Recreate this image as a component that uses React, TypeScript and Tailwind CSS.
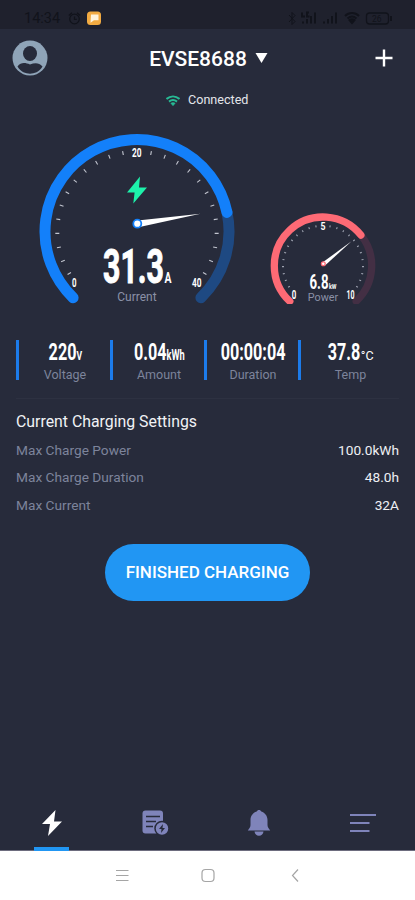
import type { ReactNode } from 'react';

type GaugeProps = {
  cx: number;
  cy: number;
  r: number;
  width: number;
  start?: number;
  value: number;
  color: string;
  track: string;
};

function polar(cx: number, cy: number, r: number, deg: number) {
  const a = (deg * Math.PI) / 180;
  return [cx + r * Math.cos(a), cy + r * Math.sin(a)];
}

function arc(cx: number, cy: number, r: number, from: number, to: number) {
  const [x1, y1] = polar(cx, cy, r, from);
  const [x2, y2] = polar(cx, cy, r, to);
  return `M${x1} ${y1}A${r} ${r} 0 ${to - from > 180 ? 1 : 0} 1 ${x2} ${y2}`;
}

function GaugeArc({ cx, cy, r, width, start = 135, value, color, track }: GaugeProps) {
  return (
    <g fill="none" strokeWidth={width} strokeLinecap="round">
      <path d={arc(cx, cy, r, 135 + value, 540 - start)} stroke={track} />
      <path d={arc(cx, cy, r, start, 135 + value)} stroke={color} />
    </g>
  );
}

function Ticks({ cx, cy, r, length, color }: { cx: number; cy: number; r: number; length: number; color: string }) {
  const steps = Array.from({ length: 12 }, (_, i) => (i + 1) * 10.15);
  return (
    <g stroke={color} strokeWidth={1.1}>
      {[...steps, ...steps.map((s) => -s)].map((s) => {
        const [x1, y1] = polar(cx, cy, r - length / 2, s - 90);
        const [x2, y2] = polar(cx, cy, r + length / 2, s - 90);
        return <line key={s} x1={x1} y1={y1} x2={x2} y2={y2} />;
      })}
    </g>
  );
}

function CurrentGauge() {
  return (
    <svg width="204" height="180" viewBox="35 130 204 180" className="font-bold">
      <GaugeArc cx={137} cy={231.5} r={92} width={11} start={134} value={213} color="#1380fa" track="#1e4982" />
      <Ticks cx={137} cy={231.5} r={79.7} length={4} color="#c3c6d0" />
      <g fill="#fff">
        <text x="132" y="156.5" fontSize="12.5" textLength="9.5" lengthAdjust="spacingAndGlyphs">20</text>
        <text x="72" y="287" fontSize="12.5" textLength="4.5" lengthAdjust="spacingAndGlyphs">0</text>
        <text x="192" y="287" fontSize="12.5" textLength="9.5" lengthAdjust="spacingAndGlyphs">40</text>
        <text x="103" y="283" fontSize="48.5" stroke="#fff" strokeWidth="1" textLength="61" lengthAdjust="spacingAndGlyphs">31.3</text>
        <text x="164.5" y="283" fontSize="15.5" textLength="7" lengthAdjust="spacingAndGlyphs">A</text>
      </g>
      <text x="137" y="301" fontSize="12" textAnchor="middle" fill="#8b91a7" className="font-normal">Current</text>
      <path d="M140 176.500 127 192.500h7.600l-1.300 11L147 187.500h-8z" fill="#1df2ab" />
      <path d="M137.700 220.500 200.500 213.800 138.400 227.200z" fill="#fff" />
      <circle cx="137.300" cy="223.700" r="4" fill="#fff" stroke="#1380fa" strokeWidth="1.800" />
    </svg>
  );
}

function PowerGauge() {
  return (
    <svg width="112" height="96" viewBox="267 208 112 96" className="font-bold">
      <GaugeArc cx={323} cy={265.7} r={48.7} width={7.3} start={133} value={186} color="#fd6a75" track="#432f44" />
      <Ticks cx={323} cy={265.7} r={40} length={2} color="#9da1af" />
      <g fill="#fff">
        <text x="320.500" y="230" fontSize="11.500" textLength="5" lengthAdjust="spacingAndGlyphs">5</text>
        <text x="291.800" y="298.500" fontSize="12" textLength="4.500" lengthAdjust="spacingAndGlyphs">0</text>
        <text x="346.500" y="298.500" fontSize="12" textLength="8" lengthAdjust="spacingAndGlyphs">10</text>
        <text x="309.500" y="288.500" fontSize="20.500" textLength="19" lengthAdjust="spacingAndGlyphs">6.8</text>
        <text x="329" y="288.500" fontSize="7" textLength="7.500" lengthAdjust="spacingAndGlyphs">kW</text>
      </g>
      <text x="323" y="300.500" fontSize="10.800" textAnchor="middle" fill="#8b91a7" className="font-normal">Power</text>
      <path d="M322.400 262.600 351.500 241.300 325 265.600z" fill="#fff" />
      <circle cx="323.300" cy="263.700" r="1.900" fill="#fff" stroke="#fd6a75" strokeWidth="1.300" />
    </svg>
  );
}

function Stat({ children, label, last = false }: { children: ReactNode; label: string; last?: boolean }) {
  return (
    <div className={`flex h-[40px] border-l-[3.5px] border-[#1c7bea] pl-px ${last ? 'flex-1' : 'w-[94px]'}`}>
      <div className="flex min-w-0 flex-1 flex-col items-center">
        <div className="flex h-[24px] items-baseline justify-center whitespace-nowrap text-[24.5px] leading-[24px] font-bold text-white">
          {children}
        </div>
        <div className="mt-[3px] text-[12.5px] leading-4 text-[#7d849b]">{label}</div>
      </div>
    </div>
  );
}

const settings = [
  ['Max Charge Power', '100.0kWh'],
  ['Max Charge Duration', '48.0h'],
  ['Max Current', '32A'],
];

function StatusBar() {
  return (
    <div className="flex h-[29px] items-start bg-[#1f212d] pt-[8px] text-[#11131b]">
      <span className="ml-[24px] w-[44px] text-[14.5px] leading-[21px]">14:34</span>
      <svg width="34" height="20" viewBox="67 8 34 20" fill="none">
        <circle cx="73.5" cy="19" r="4.8" stroke="#11131b" strokeWidth="1.3" />
        <path d="M67.8 15.5 71 12.8M79.2 15.5 76 12.8M73.5 16.5v2.8h2.3" stroke="#11131b" strokeWidth="1.2" />
        <rect x="86" y="11.5" width="14" height="13.5" rx="3.5" fill="#f2ab42" />
        <path d="M90 14.5h7.5v5.8H93l-3.5 2.5z" fill="#fff4dc" />
      </svg>
      <svg width="108" height="20" viewBox="286 8 108 20" className="mr-[21px] ml-auto" fill="none" stroke="#11131b" strokeWidth="1.3">
        <path d="m289 15 6 6.5-3 3v-12l3 3-6 6.5" strokeWidth="1" />
        <path d="M303 23.5v-2M307 23.5v-4.5M311 23.5V16M315 23.5V12.5M302 12.5v4h3M309 12.5h-2v4h2.5" strokeWidth="2" />
        <path d="M324 23.5v-2M328 23.5v-4.5M332 23.5V16M336 23.5V12.5" strokeWidth="2" />
        <path d="M345 16c4-4 10-4 14 0M347.5 18.5c3-2.6 6-2.6 9 0" strokeWidth="2" />
        <path d="m349 20 3 3.5 3-3.5c-2-1.5-4-1.5-6 0z" fill="#11131b" />
        <rect x="366.5" y="13" width="22" height="11" rx="3" />
        <path d="M391 16v5" strokeWidth="2" />
        <text x="372" y="21.5" fontSize="8.5" fill="#11131b" stroke="none">26</text>
      </svg>
    </div>
  );
}

function Header() {
  return (
    <header className="grid h-[58px] grid-cols-[1fr_auto_1fr] items-center text-white">
      <svg width="36" height="36" viewBox="0 0 36 36" className="ml-[12px]">
        <circle cx="18" cy="18" r="17.5" fill="#8fa4b8" />
        <ellipse cx="18" cy="13.5" rx="7" ry="7.5" fill="#272b3b" />
        <path d="M5.5 26.5C9 22 13 22.5 18 24.5c5-2 9-2 12.500 2C27 32 22.500 33.700 18 33.700S9 32 5.500 26.500z" fill="#272b3b" />
      </svg>
      <div className="flex items-center gap-[8px] pl-[2px]">
        <h1 className="pt-px text-[21px] leading-6 font-medium">EVSE8688</h1>
        <svg width="13" height="10" viewBox="0 0 13 10">
          <path d="M.5 0h12L6.500 10z" fill="#fff" />
        </svg>
      </div>
      <svg width="18" height="18" viewBox="0 0 18 18" className="mr-[22px] justify-self-end">
        <path d="M9 .5v17M.5 9h17" stroke="#fff" strokeWidth="2.400" />
      </svg>
    </header>
  );
}

function TabBar() {
  return (
    <nav className="mt-auto grid h-[61px] grid-cols-4 border-b border-[#6d6c7e] text-[#7f84ba]">
      <div className="flex flex-col items-center">
        <svg width="22" height="28" viewBox="0 0 22 28" className="mt-[19px]">
          <path d="M14.500 1 1 15h8L7 27 21 12.500h-8z" fill="#fff" />
        </svg>
        <div className="mt-auto -mb-px h-[4px] w-[35px] bg-[#2196f3]" />
      </div>
      <div className="flex justify-center">
        <svg width="27" height="26" viewBox="0 0 27 26" className="mt-[20px]">
          <rect x=".5" y=".5" width="20.500" height="23" rx="3" fill="currentColor" />
          <path d="M4 6.500h14M4 11.500h10M4 16.500h7" stroke="#272b3b" strokeWidth="1.300" />
          <circle cx="20" cy="18.500" r="7" fill="currentColor" stroke="#272b3b" strokeWidth="1.500" />
          <path d="m21 14-4 5h2.500l-.5 4 4-5h-2.500z" fill="#272b3b" />
        </svg>
      </div>
      <div className="flex justify-center">
        <svg width="24" height="28" viewBox="0 0 24 28" className="mt-[19px]" fill="currentColor">
          <path d="M12 1c1.200 0 1.900.7 2.300 1.500C18 3.700 20.500 7 20.500 11v5c0 2 1.200 3.500 2.700 5.500H.8c1.500-2 2.700-3.500 2.700-5.500v-5c0-4 2.500-7.300 6.200-8.500C10.100 1.700 10.800 1 12 1zM7.500 22.500h9c-.3 2.600-2 4.300-4.500 4.300s-4.200-1.700-4.500-4.300z" />
        </svg>
      </div>
      <div className="flex justify-center">
        <svg width="26" height="20" viewBox="0 0 26 20" className="mt-[23px]" stroke="currentColor" strokeWidth="2.200">
          <path d="M0 2h26M0 10h19.500M0 18h19.500" />
        </svg>
      </div>
    </nav>
  );
}

export default function App() {
  return (
    <div className="flex h-[900px] w-[415px] flex-col overflow-hidden bg-[#272b3b] font-[Roboto,sans-serif]">
      <StatusBar />
      <Header />

      <div className="flex h-[26px] items-center gap-[8px] pl-[166px] text-[12.6px] text-[#e3e5ea]">
        <svg width="14" height="11" viewBox="0 0 14 11" fill="none" stroke="#27ba94" strokeWidth="2">
          <path d="M.5 4C4.500.5 9.500.5 13.500 4M3 6.600c2.500-2 5.500-2 8 0" />
          <path d="m4.800 8.200 2.200 2.600 2.200-2.600c-1.400-.8-3-.8-4.400 0z" fill="#27ba94" strokeWidth=".5" />
        </svg>
        Connected
      </div>

      <div className="flex h-[197px] items-start pt-[17px] pl-[35px]">
        <CurrentGauge />
        <div className="mt-[78px] ml-[28px]">
          <PowerGauge />
        </div>
      </div>

      <section className="mt-[30px] flex px-4">
        <Stat label="Voltage">
          <span className="scale-x-[0.66]">220<span className="text-[13px]">V</span></span>
        </Stat>
        <Stat label="Amount">
          <span className="scale-x-[0.66]">0.04<span className="text-[14px]">kWh</span></span>
        </Stat>
        <Stat label="Duration">
          <span className="scale-x-[0.66]">00:00:04</span>
        </Stat>
        <Stat label="Temp" last>
          <span className="-ml-[16px] origin-right scale-x-[0.66]">37.8</span>
          <span className="text-[12.5px] font-normal">°C</span>
        </Stat>
      </section>

      <section className="mx-4 mt-[18px] border-t border-[#2d3141] pt-[13px]">
        <h2 className="text-[15.85px] leading-5 text-[#f1f2f5]">Current Charging Settings</h2>
        <dl className="mt-[4.500px] text-[13.7px]">
          {settings.map(([name, value]) => (
            <div key={name} className="flex h-[27.5px] items-center justify-between">
              <dt className="text-[#7d849b]">{name}</dt>
              <dd className="text-[#eef0f4]">{value}</dd>
            </div>
          ))}
        </dl>
      </section>

      <button className="mt-[24.500px] h-[57px] w-[205px] self-center rounded-full bg-[#2196f3] pt-[2px] text-[17px] font-medium text-white">
        FINISHED CHARGING
      </button>

      <TabBar />

      <div className="flex h-[49px] items-center bg-white text-[#a5a5a5]">
        <svg width="415" height="49" viewBox="0 851 415 49" fill="none" stroke="currentColor" strokeWidth="1.200">
          <path d="M116 870.500h12.500M116 875.500h12.500M116 880.500h12.500" />
          <rect x="202" y="869.500" width="12" height="12" rx="3.500" />
          <path d="m298 869.500-5.500 6 5.500 6" />
        </svg>
      </div>
    </div>
  );
}
